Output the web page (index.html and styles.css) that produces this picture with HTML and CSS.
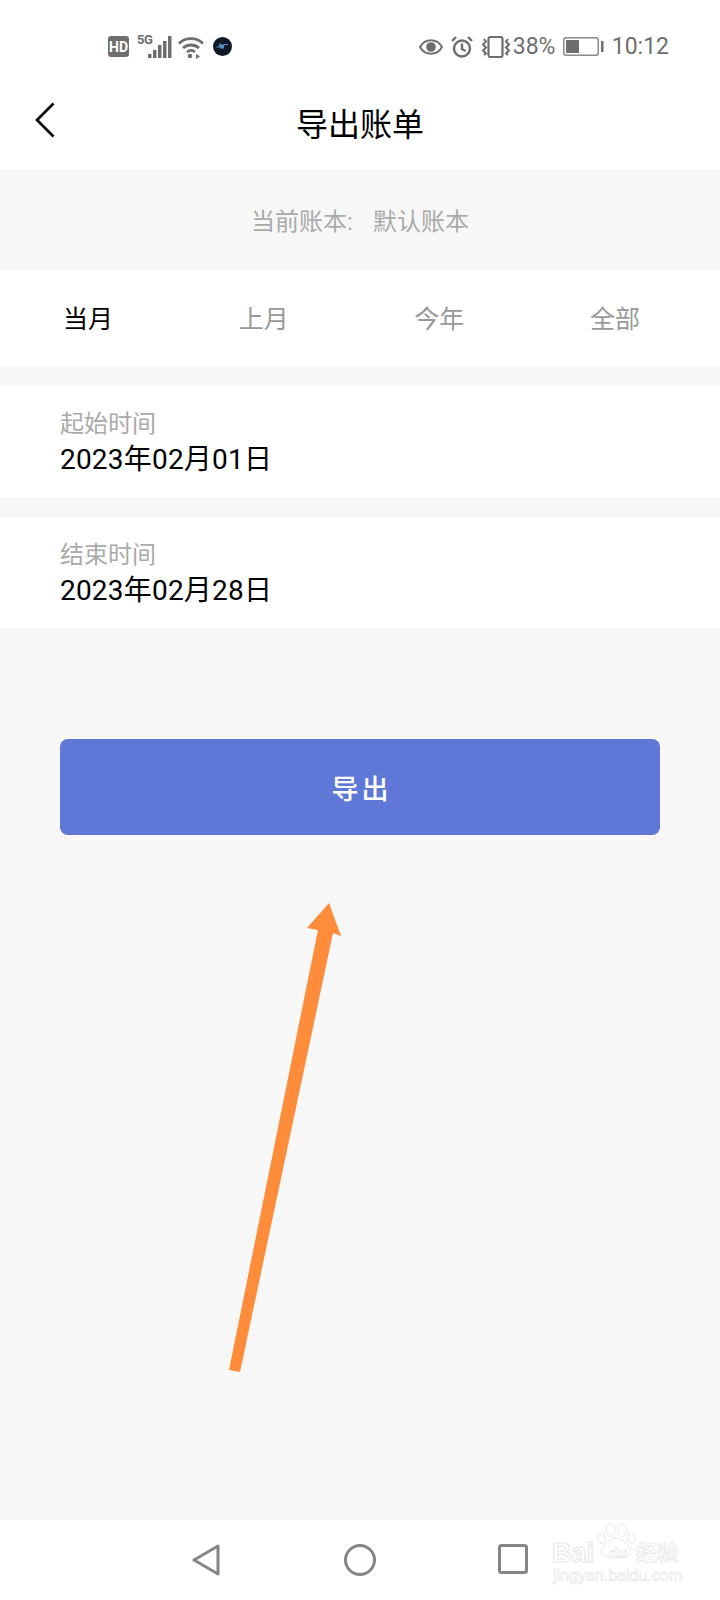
FILE: index.html
```html
<!DOCTYPE html>
<html lang="zh-CN">
<head>
<meta charset="utf-8">
<title>导出账单</title>
<link rel="stylesheet" href="styles.css">
</head>
<body>
<div class="page">
  <div class="status">
    <div class="status-left">
      <svg class="ic-hd" viewBox="0 0 21 21"><rect width="21" height="21" rx="3" fill="#6e6e6e"/><text x="10.5" y="16" class="hd-text">HD</text></svg>
      <div class="net">
        <span class="five-g">5G</span>
        <svg class="ic-signal" viewBox="0 0 24 22"><g fill="#6e6e6e"><rect x="0" y="18" width="3.500" height="4"/><rect x="5" y="14" width="3.500" height="8"/><rect x="10" y="9" width="3.500" height="13"/><rect x="15" y="5" width="3.500" height="17"/><rect x="20" y="0" width="3.500" height="22"/></g></svg>
      </div>
      <svg class="ic-wifi" viewBox="0 0 26 22"><g fill="none" stroke="#6e6e6e" stroke-width="2.800"><path d="M1 7.500C7.500 1 18.500 1 25 7.500"/><path d="M5 12c4.500-4 11.500-4 16 0"/><path d="M9 16c2.500-2 5.500-2 8 0"/></g><circle cx="12" cy="20" r="2.300" fill="#6e6e6e"/><path d="M18 18l4 2.500-4 2.500z" fill="#6e6e6e"/></svg>
      <svg class="ic-app" viewBox="0 0 19 19"><circle cx="9.500" cy="9.500" r="9.500" fill="#0f1726"/><path d="M3.500 10h2.500l1-2.500 1 4 1-4 1 4 1-4h4" fill="none" stroke="#5a9ac8" stroke-width="1.200"/></svg>
    </div>
    <div class="status-right">
      <svg class="ic-eye" viewBox="0 0 24 16"><path d="M1 8c5-9 17-9 22 0-5 9-17 9-22 0z" fill="none" stroke="#6e6e6e" stroke-width="2"/><circle cx="12" cy="8" r="4.800" fill="#6e6e6e"/></svg>
      <svg class="ic-alarm" viewBox="0 0 22 22"><g fill="none" stroke="#6e6e6e" stroke-width="2.400"><circle cx="11" cy="12.500" r="8"/><path d="M11 7.500v5.500l3.500 2"/><path d="M1 5l4-4M21 5l-4-4"/></g></svg>
      <svg class="ic-vibrate" viewBox="0 0 30 22"><rect x="7.500" y="1" width="14" height="20" rx="2" fill="none" stroke="#6e6e6e" stroke-width="2.200"/><path d="M3 3l2 2.500-3 3 3 3-3 3 3 3-2 1.500M27 3l-2 2.500 3 3-3 3 3 3-3 3 2 1.500" fill="none" stroke="#6e6e6e" stroke-width="2"/></svg>
      <span class="pct">38%</span>
      <svg class="ic-battery" viewBox="0 0 41 19"><rect x="0.750" y="0.750" width="34.500" height="17.500" rx="2.500" fill="none" stroke="#8a8a8a" stroke-width="1.500"/><rect x="3" y="3" width="13" height="13" fill="#6e6e6e"/><rect x="38" y="4" width="2.500" height="11" fill="#6e6e6e"/></svg>
      <span class="time">10:12</span>
    </div>
  </div>

  <header class="title-bar">
    <svg class="ic-back" viewBox="0 0 20 36"><path d="M18.500 1.500L2 18l16.500 16.500" fill="none" stroke="#000" stroke-width="2.600"/></svg>
    <h1 class="title">导出账单</h1>
  </header>

  <main class="main">
    <div class="book"><span>当前账本:</span><span>默认账本</span></div>
    <nav class="tabs">
      <span class="tab tab-active">当月</span>
      <span class="tab">上月</span>
      <span class="tab">今年</span>
      <span class="tab">全部</span>
    </nav>
    <section class="field">
      <div class="field-label">起始时间</div>
      <div class="field-value">2023年02月01日</div>
    </section>
    <section class="field">
      <div class="field-label">结束时间</div>
      <div class="field-value">2023年02月28日</div>
    </section>
    <button class="export">导出</button>
  </main>

  <footer class="nav">
    <svg class="nav-back" viewBox="0 0 28 32"><path d="M26 2v28L2 16z" fill="none" stroke="#858585" stroke-width="3" stroke-linejoin="round"/></svg>
    <svg class="nav-home" viewBox="0 0 32 32"><circle cx="16" cy="16" r="14.500" fill="none" stroke="#858585" stroke-width="3"/></svg>
    <svg class="nav-recent" viewBox="0 0 30 30"><rect x="1.500" y="1.500" width="27" height="27" rx="2" fill="none" stroke="#858585" stroke-width="3"/></svg>
  </footer>

  <div class="watermark">
    <svg class="paw" viewBox="0 0 46 40"><g fill="#fff" stroke="#e6e6e6" stroke-width="1"><ellipse cx="7" cy="17" rx="4" ry="6"/><ellipse cx="17" cy="8" rx="5" ry="7"/><ellipse cx="30" cy="8" rx="5" ry="7"/><ellipse cx="40" cy="17" rx="4" ry="6"/><path d="M23 17c7 0 16 9 16 15s-8 6-16 6-16 0-16-6 9-15 16-15z"/></g></svg>
    <div class="wm-line"><span class="wm-bai">Bai</span><span class="wm-du">du</span><span class="wm-cn">经验</span></div>
    <div class="wm-url">jingyan.baidu.com</div>
  </div>

  <svg class="arrow" viewBox="0 0 720 1600"><path d="M329 903L341 936 333 933 240 1372 229 1370 318 930 307 928z" fill="#ff8c3a"/></svg>
</div>
</body>
</html>
```

FILE: styles.css
```css
* { box-sizing: border-box; }
html, body { margin: 0; padding: 0; }
body {
  font-family: Roboto, "Noto Sans CJK SC", sans-serif;
  background: #fff;
}
.page {
  position: relative;
  width: 720px;
  height: 1600px;
  display: flex;
  flex-direction: column;
  overflow: hidden;
}
.status {
  height: 76px;
  padding: 35px 51px 0 108px;
  display: flex;
  justify-content: space-between;
  align-items: flex-start;
  color: #6e6e6e;
}
.status-left, .status-right { display: flex; align-items: center; height: 23px; }
.ic-hd { width: 21px; height: 21px; margin-right: 8px; }
.hd-text { font: 700 14px Roboto, sans-serif; fill: #fff; text-anchor: middle; }
.net { position: relative; width: 35px; height: 22px; margin-right: 6px; }
.five-g {
  position: absolute;
  left: 0;
  top: -3px;
  font: 700 13px/13px Roboto, sans-serif;
  letter-spacing: -.5px;
}
.ic-signal { position: absolute; right: 0; top: 0; width: 24px; height: 22px; }
.ic-wifi { width: 26px; height: 22px; margin-right: 9px; overflow: visible; }
.ic-app { width: 19px; height: 19px; }
.ic-eye { width: 24px; height: 16px; margin-right: 8px; }
.ic-alarm { width: 22px; height: 22px; margin-right: 8px; }
.ic-vibrate { width: 30px; height: 22px; margin-right: 2px; }
.pct { font-size: 23px; line-height: 23px; width: 50px; }
.ic-battery { width: 41px; height: 19px; margin-right: 8px; }
.time { font-size: 23px; line-height: 23px; }

.title-bar {
  position: relative;
  height: 93px;
  display: flex;
  align-items: center;
  justify-content: center;
  padding-top: 4px;
}
.ic-back { position: absolute; left: 35px; top: 26px; width: 20px; height: 36px; }
.title {
  margin: 0;
  font-size: 32px;
  font-weight: 400;
  line-height: 44px;
  color: #000;
}

.main {
  flex: 1;
  background: #f7f7f7;
  display: flex;
  flex-direction: column;
}
.book {
  height: 101px;
  display: flex;
  justify-content: center;
  align-items: center;
  gap: 20px;
  font-size: 24px;
  color: #aaa;
}
.tabs {
  height: 96px;
  margin-bottom: 20px;
  background: #fff;
  padding: 3px 80px 0 63px;
  display: flex;
  justify-content: space-between;
  align-items: center;
}
.tab { font-size: 25px; line-height: 32px; color: #999; }
.tab-active { color: #000; }
.field {
  height: 111px;
  margin-bottom: 20px;
  padding: 20px 60px 0;
  background: #fff;
}
.field-label { font-size: 24px; line-height: 36px; color: #aaa; }
.field-value { font-size: 28px; line-height: 36px; letter-spacing: .2px; color: #000; }
.export {
  display: block;
  margin: 91px 60px 0;
  width: 600px;
  height: 96px;
  padding: 0 0 0 3px;
  border: 0;
  border-radius: 8px;
  background: #5f77d6;
  color: #fff;
  font-family: inherit;
  font-size: 27px;
  font-weight: 500;
  letter-spacing: 3px;
}

.nav {
  height: 80px;
  padding-top: 24px;
  position: relative;
  display: flex;
  align-items: flex-start;
  background: #fff;
}
.nav-back { width: 28px; height: 32px; margin-left: 192px; }
.nav-home { width: 32px; height: 32px; margin-left: 124px; }
.nav-recent { width: 30px; height: 30px; margin-left: 122px; }

.watermark {
  position: absolute;
  left: 552px;
  top: 1522px;
  width: 130px;
  height: 62px;
}
.paw { position: absolute; left: 43px; top: 0; width: 42px; height: 38px; }
.wm-line {
  position: absolute;
  left: 0;
  top: 17px;
  width: 130px;
  display: flex;
  align-items: center;
  line-height: 28px;
}
.wm-bai { font: 700 27px/28px "Liberation Sans", sans-serif; color: #fff; -webkit-text-stroke: 1px #e6e6e6; width: 48px; }
.wm-du { font: 700 15px/28px "Liberation Sans", sans-serif; color: #fff; -webkit-text-stroke: .6px #e2e2e2; width: 36px; text-align: center; }
.wm-cn { font-size: 21px; line-height: 28px; font-weight: 700; color: #fff; -webkit-text-stroke: .7px #e6e6e6; white-space: nowrap; }
.wm-url { position: absolute; left: 1px; top: 45px; font: 400 16px/18px "Liberation Sans", sans-serif; color: #fff; -webkit-text-stroke: .6px #e6e6e6; white-space: nowrap; }

.arrow { position: absolute; left: 0; top: 0; width: 720px; height: 1600px; pointer-events: none; }
```
